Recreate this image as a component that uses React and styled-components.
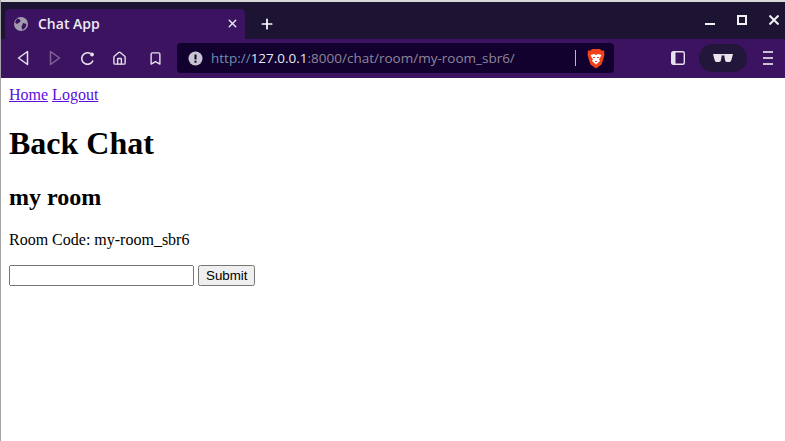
import React from 'react';
import styled, { createGlobalStyle } from 'styled-components';
import { X, Plus, Home, Bookmark } from 'lucide-react';

const GlobalStyle = createGlobalStyle`
  html, body {
    margin: 0;
    padding: 0;
    background: #fff;
  }
`;

const Window = styled.div`
  width: 785px;
  height: 441px;
  display: flex;
  flex-direction: column;
  overflow: hidden;
  box-sizing: border-box;
  border-left: 1px solid #a4a4a4;
`;

const TitleBar = styled.div`
  height: 39px;
  box-sizing: border-box;
  flex: none;
  display: flex;
  align-items: flex-end;
  background: #1d1433;
  border-top: 2px solid #d8d8d8;
  margin-left: -1px;
  padding-left: 5px;
`;

const Tab = styled.div`
  width: 240px;
  height: 30px;
  box-sizing: border-box;
  display: flex;
  align-items: center;
  padding: 0 6px 1px 9px;
  background: #3b1361;
  border-radius: 5px 5px 0 0;
  color: #eeeaf4;
  font: 600 14px "Open Sans", sans-serif;
`;

const TabTitle = styled.span`
  flex: 1;
  margin-left: 10px;
`;

const NewTab = styled.div`
  display: flex;
  margin: 0 0 7px 14px;
  color: #fff;
`;

const WindowButtons = styled.div`
  margin-left: auto;
  display: flex;
  gap: 22px;
  padding: 0 6px 14px 0;
`;

const ToolBar = styled.div`
  height: 39px;
  flex: none;
  box-sizing: border-box;
  display: flex;
  align-items: center;
  padding: 0 12px 1px 15px;
  background: #3b1361;
  color: #e6e1ec;
  margin-left: -1px;
`;

const ToolIcon = styled.div`
  display: flex;
  width: 16px;
  justify-content: center;
  margin-right: ${(p) => p.$gap}px;
  opacity: ${(p) => (p.$dim ? 0.4 : 1)};
`;

const AddressBar = styled.div`
  width: 437px;
  height: 30px;
  box-sizing: border-box;
  display: flex;
  align-items: center;
  padding: 0 0 0 11px;
  margin-left: 14px;
  background: #12012e;
  border-radius: 4px;
  font: 13.5px "Open Sans", sans-serif;
  color: #8d8799;
`;

const Url = styled.span`
  flex: 1;
  margin-left: 8px;
  white-space: nowrap;
`;

const Scheme = styled.span`
  color: #6f8fb0;
`;

const Host = styled.span`
  color: #e4e9f0;
`;

const Divider = styled.div`
  width: 1px;
  height: 16px;
  background: #bdb8c6;
  margin-right: 11px;
`;

const Shield = styled.svg`
  margin-right: 9px;
`;

const ToolRight = styled.div`
  margin-left: auto;
  display: flex;
  align-items: center;
`;

const GlassesPill = styled.div`
  width: 48px;
  height: 28px;
  display: flex;
  align-items: center;
  justify-content: center;
  margin: 0 16px 0 14px;
  background: #22163a;
  border-radius: 14px;
`;

const Page = styled.main`
  flex: 1;
  padding: 8px;
  color: #000;
  font: 16px "Liberation Serif", serif;
`;

const Nav = styled.div`
  a {
    color: #5a0ee0;
  }
`;

const Title = styled.h1`
  font-size: 32px;
  margin: 21.44px 0;
`;

const Room = styled.h2`
  font-size: 24px;
  margin: 19.92px 0;
`;

const Code = styled.p`
  margin: 16px 0;
`;

const Form = styled.form`
  display: block;
`;

const Field = styled.input`
  font: 13.33px "Liberation Sans", sans-serif;
`;

const Submit = styled.input`
  font: 13.33px "Liberation Sans", sans-serif;
`;

const GlobeIcon = () => (
  <svg width="14" height="14" viewBox="0 0 14 14">
    <circle cx="7" cy="7" r="7" fill="#a29cac" />
    <path d="M3 1.500l3 1 .5 2-2 1.500-1.500 1-2-1.500zM9 6l3.500 1-1 3.500-3 2.500-1-3z" fill="#3b1361" />
  </svg>
);

const MinimizeIcon = () => (
  <svg width="10" height="10" viewBox="0 0 10 10" fill="#f0f0f0">
    <rect x="0" y="8" width="10" height="2" />
  </svg>
);

const MaximizeIcon = () => (
  <svg width="10" height="10" viewBox="0 0 10 10" fill="none" stroke="#f0f0f0" strokeWidth="2">
    <rect x="1" y="1" width="8" height="8" />
  </svg>
);

const CloseIcon = () => (
  <svg width="10" height="10" viewBox="0 0 10 10" fill="none" stroke="#f0f0f0" strokeWidth="2">
    <path d="M.500.500l9 9M9.500.500l-9 9" />
  </svg>
);

const BackIcon = ({ filled }) => (
  <svg width="12" height="16" viewBox="0 0 12 16" fill="none" stroke="currentColor" strokeWidth="1.500" strokeLinejoin="round">
    {filled ? <path d="M1.500 1.500l9 6.500-9 6.500z" /> : <path d="M10.500 1.500L1.500 8l9 6.500z" />}
  </svg>
);

const ReloadIcon = () => (
  <svg width="15" height="15" viewBox="0 0 15 15" fill="none" stroke="currentColor" strokeWidth="1.600">
    <path d="M13 9.500A5.800 5.800 0 1 1 10.500 2.500" />
    <circle cx="12" cy="3.500" r="1.900" fill="currentColor" stroke="none" />
  </svg>
);

const AlertIcon = () => (
  <svg width="15" height="15" viewBox="0 0 15 15">
    <circle cx="7.500" cy="7.500" r="7" fill="#c9c4d2" />
    <rect x="6.500" y="3.500" width="2" height="5" fill="#12012e" />
    <rect x="6.500" y="9.700" width="2" height="2" fill="#12012e" />
  </svg>
);

const BraveLogo = () => (
  <Shield width="18" height="21" viewBox="0 0 18 21">
    <path d="M5 1h8l1.500 1.500L17 2.500l.5 4-1 4-2 6L9 20.500 3.500 16.500l-2-6-1-4 .5-4L3.500 2.500z" fill="#f1421c" />
    <path d="M3.500 7l3.500-1 2 1 2-1 3.500 1-1.500 3-1 1 1 2-4 3.500L5 13l1-2-1-1z" fill="#fff" />
    <path d="M6 9h2v1H6zM10 9h2v1h-2zM8 13h2v1H8z" fill="#f1421c" />
  </Shield>
);

const Glasses = () => (
  <svg width="20" height="8" viewBox="0 0 20 8" fill="#e8e6ec">
    <path d="M0 0h9l-1 6q-.3 2-1.800 2H3.500q-1.500 0-1.900-2zM11 0h9l-1.600 6q-.4 2-1.900 2h-2.700q-1.500 0-1.800-2zM9 0h2v1.500H9z" />
  </svg>
);

const SidebarIcon = () => (
  <svg width="14" height="14" viewBox="0 0 14 14">
    <rect x="0.700" y="0.700" width="12.600" height="12.600" rx="1.500" fill="none" stroke="#e6e1ec" strokeWidth="1.400" />
    <rect x="1" y="1" width="3.500" height="12" fill="#e6e1ec" />
  </svg>
);

const MenuIcon = () => (
  <svg width="10" height="14" viewBox="0 0 10 14" fill="#c9c2d4">
    <rect y="0" width="10" height="2" />
    <rect y="6" width="10" height="2" />
    <rect y="12" width="10" height="2" />
  </svg>
);

export default function App() {
  return (
    <>
      <GlobalStyle />
      <Window>
        <TitleBar>
          <Tab>
            <GlobeIcon />
            <TabTitle>Chat App</TabTitle>
            <X size={13} strokeWidth={2.6} />
          </Tab>
          <NewTab>
            <Plus size={16} strokeWidth={2.6} />
          </NewTab>
          <WindowButtons>
            <MinimizeIcon />
            <MaximizeIcon />
            <CloseIcon />
          </WindowButtons>
        </TitleBar>
        <ToolBar>
          <ToolIcon $gap={16}><BackIcon /></ToolIcon>
          <ToolIcon $gap={16} $dim><BackIcon filled /></ToolIcon>
          <ToolIcon $gap={16}><ReloadIcon /></ToolIcon>
          <ToolIcon $gap={20}><Home size={15} strokeWidth={2.2} /></ToolIcon>
          <ToolIcon $gap={0}><Bookmark size={15} strokeWidth={2.2} /></ToolIcon>
          <AddressBar>
            <AlertIcon />
            <Url>
              <Scheme>http://</Scheme>
              <Host>127.0.0.1</Host>:8000/chat/room/my-room_sbr6/
            </Url>
            <Divider />
            <BraveLogo />
          </AddressBar>
          <ToolRight>
            <SidebarIcon />
            <GlassesPill><Glasses /></GlassesPill>
            <MenuIcon />
          </ToolRight>
        </ToolBar>
        <Page>
          <Nav>
            <a href="#home">Home</a> <a href="#logout">Logout</a>
          </Nav>
          <Title>Back Chat</Title>
          <Room>my room</Room>
          <Code>Room Code: my-room_sbr6</Code>
          <Form onSubmit={(e) => e.preventDefault()}>
            <Field type="text" /> <Submit type="submit" value="Submit" />
          </Form>
        </Page>
      </Window>
    </>
  );
}
